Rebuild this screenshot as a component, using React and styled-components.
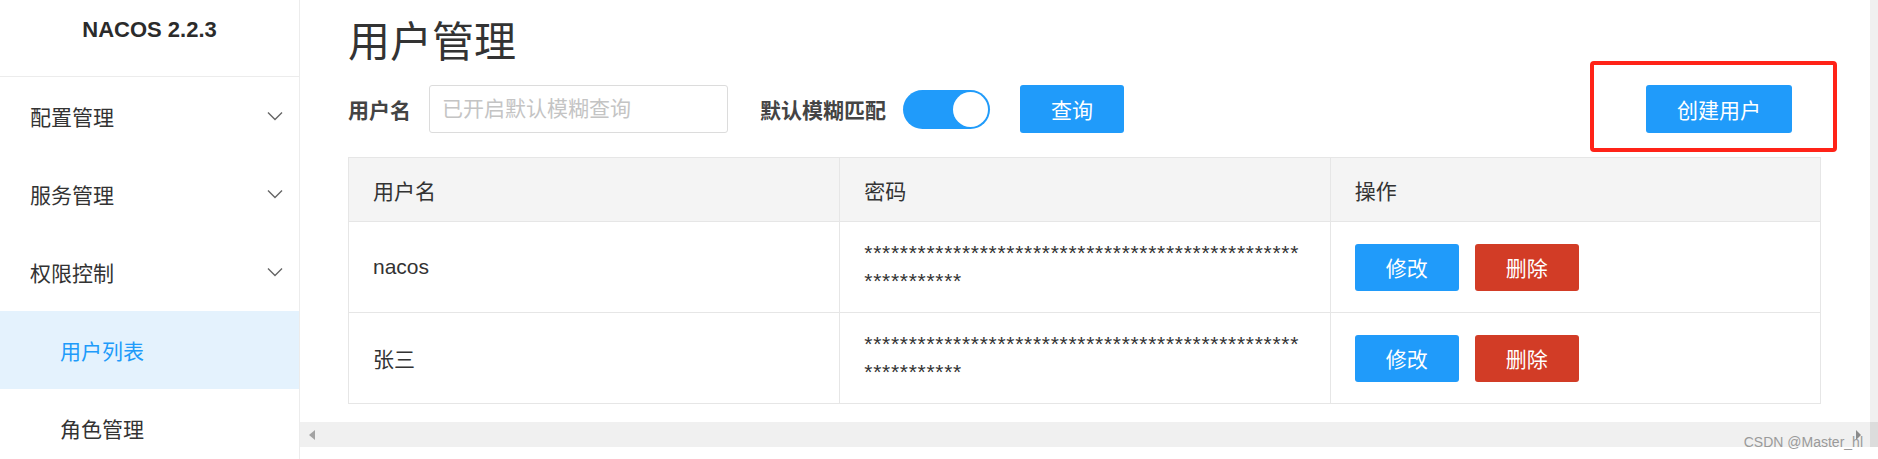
import React from 'react';
import styled, { createGlobalStyle } from 'styled-components';

const GlobalStyle = createGlobalStyle`
  html, body { margin: 0; padding: 0; background: #fff; }
  body {
    font-family: "Liberation Sans", "Noto Sans CJK SC", sans-serif;
    color: #333;
  }
  * { box-sizing: border-box; }
`;

const BLUE = '#209bfa';
const RED = '#d23c26';
const LINE = '#e6e6e6';

const Page = styled.div`
  position: relative;
  display: flex;
  width: 1878px;
  height: 459px;
  overflow: hidden;
`;

const Sidebar = styled.aside`
  flex: none;
  width: 300px;
  border-right: 1px solid #ececec;
  display: flex;
  flex-direction: column;
  overflow: hidden;
`;

const Brand = styled.div`
  flex: none;
  height: 77px;
  padding-top: 17px;
  border-bottom: 1px solid #ececec;
  text-align: center;
  font-size: 22px;
  line-height: 26px;
  font-weight: bold;
  color: #2b2b2b;
`;

const Menu = styled.nav`
  flex: none;
  display: flex;
  flex-direction: column;
`;

const MenuItem = styled.div`
  flex: none;
  height: 78px;
  display: flex;
  align-items: center;
  justify-content: space-between;
  padding: 0 16px 0 ${(p) => (p.$sub ? 60 : 30)}px;
  font-size: 21px;
  color: ${(p) => (p.$active ? BLUE : '#333')};
  background: ${(p) => (p.$active ? '#e4f2fd' : 'transparent')};
`;

const Chevron = () => (
  <svg width="16" height="10" viewBox="0 0 16 10">
    <polyline points="1,1.5 8,8.5 15,1.5" fill="none" stroke="#666" strokeWidth="1.4" />
  </svg>
);

const Main = styled.main`
  flex: 1;
  min-width: 0;
  display: flex;
  flex-direction: column;
`;

const MainBody = styled.div`
  flex: 1;
  display: flex;
  min-height: 0;
`;

const Content = styled.div`
  flex: 1;
  padding: 0 49px 0 48px;
`;

const VScroll = styled.div`
  flex: none;
  width: 8px;
  background: #f0f0f0;
`;

const HScrollRow = styled.div`
  flex: none;
  height: 25px;
  display: flex;
  margin-bottom: 12px;
`;

const HTrack = styled.div`
  flex: 1;
  display: flex;
  align-items: center;
  justify-content: space-between;
  padding: 0 9px;
  background: #f0f0f0;
`;

const Corner = styled.div`
  flex: none;
  width: 8px;
  background: #dcdcdc;
`;

const Arrow = styled.span`
  width: 0;
  height: 0;
  border-top: 5px solid transparent;
  border-bottom: 5px solid transparent;
  ${(p) =>
    p.$dir === 'left'
      ? 'border-right: 6px solid #a3a3a3;'
      : 'border-left: 5px solid #8a8a8a;'}
`;

const Title = styled.h1`
  margin: 0;
  padding-top: 15px;
  font-size: 42px;
  line-height: 56px;
  font-weight: normal;
  color: #333;
`;

const SearchRow = styled.div`
  margin-top: 14px;
  height: 48px;
  display: flex;
  align-items: center;
`;

const Label = styled.span`
  font-size: 21px;
  font-weight: bold;
  color: #444;
  margin-right: ${(p) => p.$gap}px;
`;

const Input = styled.input`
  width: 299px;
  height: 48px;
  border: 1px solid #dcdcdc;
  border-radius: 3px;
  padding: 0 12px;
  font-size: 21px;
  font-family: inherit;
  color: #333;
  margin-right: 32px;
  outline: none;
  &::placeholder { color: #c4c4c4; }
`;

const Toggle = styled.span`
  position: relative;
  width: 87px;
  height: 39px;
  border-radius: 20px;
  background: ${BLUE};
  margin-right: 30px;
  display: inline-flex;
  align-items: center;
  justify-content: flex-end;
  padding-right: 2px;
`;

const Knob = styled.span`
  width: 35px;
  height: 35px;
  border-radius: 50%;
  background: #fff;
`;

const Button = styled.button`
  width: ${(p) => p.$w || 104}px;
  height: ${(p) => p.$h || 48}px;
  border: none;
  border-radius: 3px;
  background: ${(p) => (p.$danger ? RED : BLUE)};
  color: #fff;
  font-size: 21px;
  font-family: inherit;
  padding: 0;
  cursor: pointer;
`;

const Spacer = styled.div`
  flex: 1;
`;

const CreateWrap = styled.div`
  position: relative;
  margin-right: 29px;
  display: flex;
`;

const Highlight = styled.span`
  position: absolute;
  left: -56px;
  top: -24px;
  right: -45px;
  bottom: -19px;
  border: 4px solid #ff2318;
  border-radius: 4px;
  pointer-events: none;
`;

const Table = styled.div`
  margin-top: 24px;
  border: 1px solid ${LINE};
`;

const Row = styled.div`
  display: grid;
  grid-template-columns: repeat(3, 1fr);
  height: ${(p) => (p.$head ? 64 : p.$last ? 90 : 91)}px;
  background: ${(p) => (p.$head ? '#f4f4f4' : '#fff')};
  border-bottom: ${(p) => (p.$last ? 'none' : `1px solid ${LINE}`)};
`;

const Cell = styled.div`
  display: flex;
  align-items: center;
  gap: 16px;
  padding-left: 24px;
  font-size: 21px;
  color: #333;
  & + & { border-left: 1px solid ${LINE}; }
`;

const Stars = styled.div`
  width: 440px;
  word-break: break-all;
  font-size: 21px;
  line-height: 28px;
  letter-spacing: 0.7px;
  color: #333;
`;

const Watermark = styled.span`
  position: absolute;
  right: 15px;
  bottom: 10px;
  font-size: 14px;
  line-height: 14px;
  color: #9a9a9a;
`;

const menu = [
  { label: '配置管理', chevron: true },
  { label: '服务管理', chevron: true },
  { label: '权限控制', chevron: true },
  { label: '用户列表', sub: true, active: true },
  { label: '角色管理', sub: true },
];

const users = [
  { name: 'nacos', pwd: '*'.repeat(60) },
  { name: '张三', pwd: '*'.repeat(60) },
];

export default function App() {
  return (
    <>
      <GlobalStyle />
      <Page>
        <Sidebar>
          <Brand>NACOS 2.2.3</Brand>
          <Menu>
            {menu.map((m) => (
              <MenuItem key={m.label} $sub={m.sub} $active={m.active}>
                <span>{m.label}</span>
                {m.chevron && <Chevron />}
              </MenuItem>
            ))}
          </Menu>
        </Sidebar>
        <Main>
          <MainBody>
            <Content>
              <Title>用户管理</Title>
              <SearchRow>
                <Label $gap={18}>用户名</Label>
                <Input placeholder="已开启默认模糊查询" />
                <Label $gap={17}>默认模糊匹配</Label>
                <Toggle>
                  <Knob />
                </Toggle>
                <Button>查询</Button>
                <Spacer />
                <CreateWrap>
                  <Button $w={146}>创建用户</Button>
                  <Highlight />
                </CreateWrap>
              </SearchRow>
              <Table>
                <Row $head>
                  <Cell>用户名</Cell>
                  <Cell>密码</Cell>
                  <Cell>操作</Cell>
                </Row>
                {users.map((u, i) => (
                  <Row key={u.name} $last={i === users.length - 1}>
                    <Cell>{u.name}</Cell>
                    <Cell>
                      <Stars>{u.pwd}</Stars>
                    </Cell>
                    <Cell>
                      <Button $h={47}>修改</Button>
                      <Button $h={47} $danger>删除</Button>
                    </Cell>
                  </Row>
                ))}
              </Table>
            </Content>
            <VScroll />
          </MainBody>
          <HScrollRow>
            <HTrack>
              <Arrow $dir="left" />
              <Arrow $dir="right" />
            </HTrack>
            <Corner />
          </HScrollRow>
        </Main>
        <Watermark>CSDN @Master_hl</Watermark>
      </Page>
    </>
  );
}
